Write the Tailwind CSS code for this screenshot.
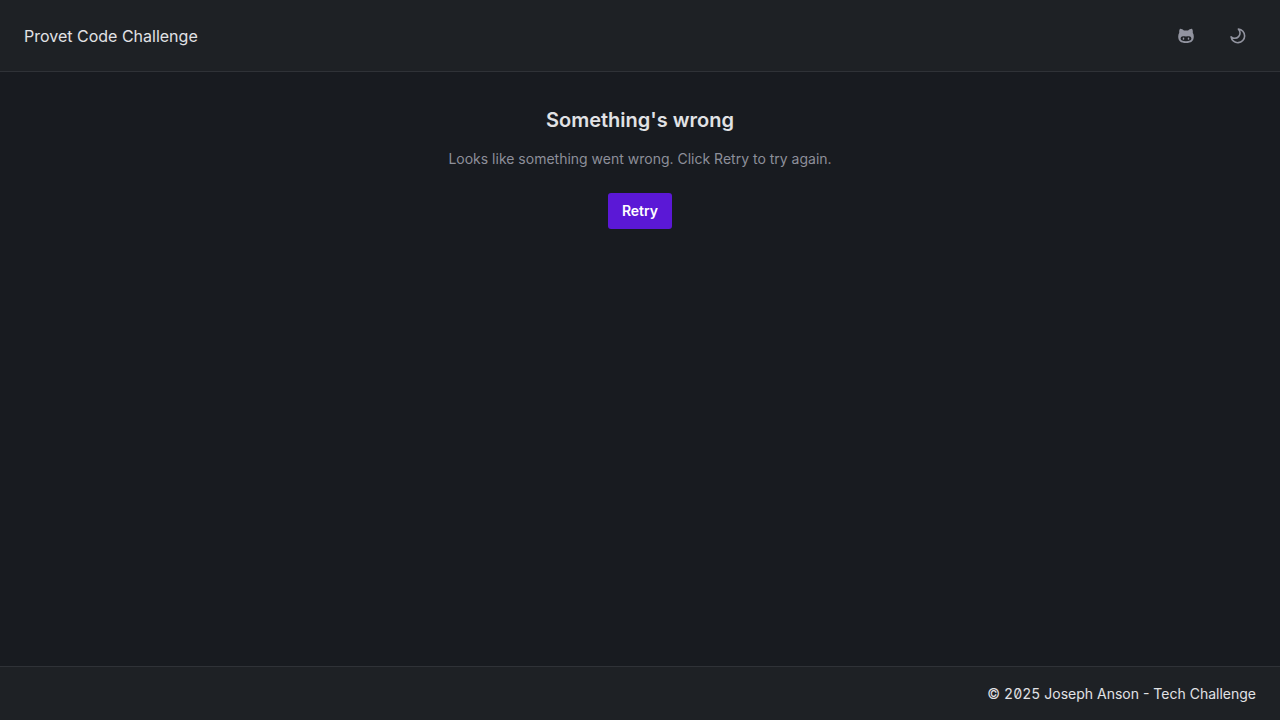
<!DOCTYPE html>
<html lang="en">
<head>
<meta charset="utf-8">
<meta name="viewport" content="width=device-width, initial-scale=1">
<title>Provet Code Challenge</title>
<script src="https://cdn.jsdelivr.net/npm/@tailwindcss/browser@4"></script>
</head>
<body class="flex min-h-screen flex-col bg-[#181b20] font-['Inter',sans-serif] text-sm text-[#e1e2e5] antialiased">
<header class="flex h-18 items-center justify-between border-b border-[#2f3237] bg-[#1e2125] px-6">
  <h1 class="text-base">Provet Code Challenge</h1>
  <nav class="flex gap-4 text-[#9294a0]">
    <a href="#" aria-label="GitHub" class="flex size-9 items-center justify-center">
      <svg class="size-4" viewBox="0 0 16 16" fill="currentColor" aria-hidden="true">
        <path fill-rule="evenodd" d="M1.800.9C3.200.7 4.800 1.500 5.900 2.600Q8 2.200 10.100 2.600C11.200 1.500 12.800.7 14.200.9Q15.100 2.700 14.800 4.700Q15.800 6.200 15.800 8.500C15.800 13 13.200 15 8 15S.2 13 .2 8.500Q.2 6.200 1.200 4.700Q.9 2.700 1.800.9ZM5 8.200C3.400 8.200 2.600 9.200 2.600 10.500C2.600 12.500 4.400 13.200 8 13.200S13.400 12.500 13.400 10.500C13.400 9.200 12.600 8.200 11 8.200C9.900 8.200 9.200 8.400 8 8.400S6.100 8.200 5 8.200Z"/>
        <ellipse cx="5.500" cy="10.700" rx=".8" ry="1.100"/><ellipse cx="10.500" cy="10.700" rx=".8" ry="1.100"/>
      </svg>
    </a>
    <button type="button" aria-label="Toggle dark mode" class="flex size-9 items-center justify-center">
      <svg class="size-4" viewBox="0 0 16 16" fill="none" stroke="currentColor" stroke-width="1.600" stroke-linejoin="round" aria-hidden="true">
        <path d="M8.400 1.100A6.800 6.800 0 1 1 1.100 8.800A5.300 5.300 0 0 0 8.400 1.100Z"/>
      </svg>
    </button>
  </nav>
</header>
<main class="flex flex-1 flex-col items-center px-6 pt-9 text-center">
  <h2 class="text-xl leading-6 font-semibold">Something's wrong</h2>
  <p class="mt-4 leading-[22px] text-[#8d8f9a]">Looks like something went wrong. Click Retry to try again.</p>
  <button type="button" class="mt-[23px] h-9 rounded-[3px] bg-[#5b18d6] px-3.5 font-semibold text-white">Retry</button>
</main>
<footer class="flex h-[54px] items-center justify-end border-t border-[#2f3237] bg-[#1e2125] px-6">
  <p>© <span class="[font-feature-settings:'tnum','zero']">2025</span> Joseph Anson - Tech Challenge</p>
</footer>
</body>
</html>
